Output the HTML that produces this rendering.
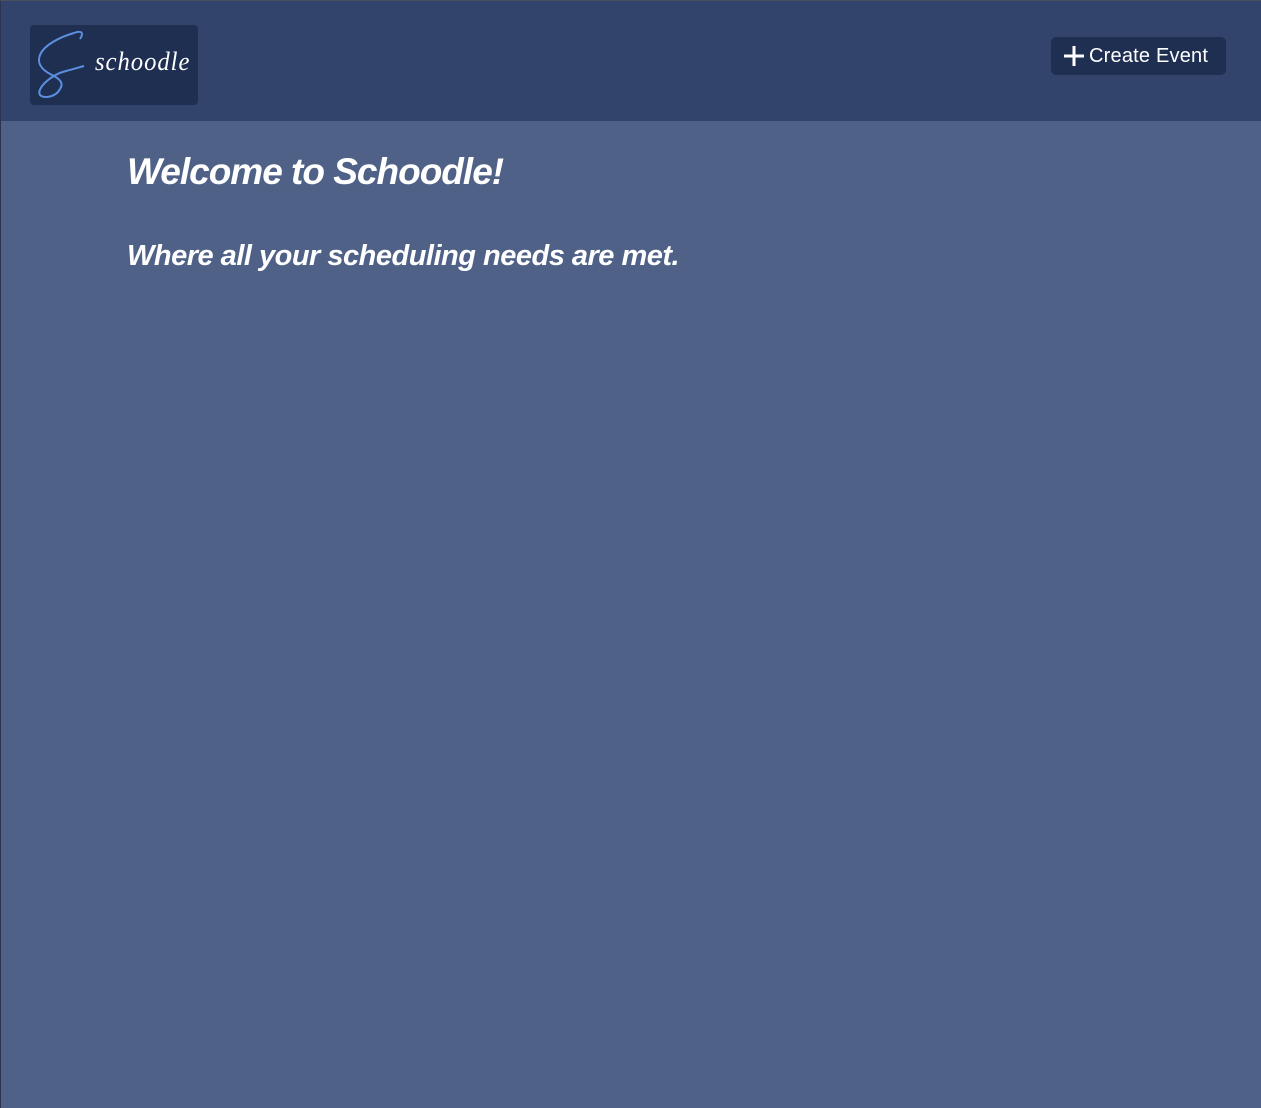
<!DOCTYPE html>
<html><head><style>
html,body{margin:0;padding:0;}
body{width:1261px;height:1108px;background:#4f6186;font-family:"Liberation Sans",sans-serif;position:relative;overflow:hidden;}
.lb{position:absolute;left:0;top:0;width:1px;height:1108px;background:#2a3350;z-index:2;}
.top{position:absolute;left:0;top:0;width:1261px;height:1px;background:#4a4f5e;z-index:2;}
.hdr{position:absolute;left:0;top:1px;width:1261px;height:120px;background:#32446b;}
.logo{position:absolute;left:30px;top:24px;width:168px;height:80px;background:#1f2f52;border-radius:4px;}
.logo span{position:absolute;left:65px;top:22px;color:#fff;font-family:"Liberation Serif",serif;font-style:italic;font-size:26px;letter-spacing:1px;transform:scaleX(0.95);transform-origin:left;}
.btn{position:absolute;left:1051px;top:36px;width:175px;height:38px;background:#1f2f52;border-radius:5px;color:#fff;font-size:20px;line-height:38px;}
.btn span{position:absolute;left:38px;top:0;letter-spacing:0.2px;}
h1{position:absolute;left:127px;top:151px;margin:0;color:#fff;font-size:37px;font-style:italic;font-weight:bold;letter-spacing:-1px;}
h2{position:absolute;left:127px;top:240px;margin:0;color:#fff;font-size:29px;font-style:italic;font-weight:bold;letter-spacing:-0.5px;}
</style></head><body>
<div class="lb"></div><div class="top"></div>
<div class="hdr">
<div class="logo">
<svg width="64" height="80" style="position:absolute;left:0;top:0"><path d="M50 14 C54 8,52 5,44 8 C30 12,14 20,10 30 C6 40,14 46,22 50 C30 54,34 58,30 64 C26 72,14 74,10 70 C6 64,20 50,36 46 C44 44,50 42,54 41" fill="none" stroke="#5b8fe0" stroke-width="2"/></svg>
<span>schoodle</span>
</div>
<div class="btn"><svg width="24" height="24" style="position:absolute;left:11px;top:7px"><path d="M12 2 V22 M2 12 H22" stroke="#fff" stroke-width="3"/></svg><span>Create Event</span></div>
</div>
<h1>Welcome to Schoodle!</h1>
<h2>Where all your scheduling needs are met.</h2>
</body></html>
